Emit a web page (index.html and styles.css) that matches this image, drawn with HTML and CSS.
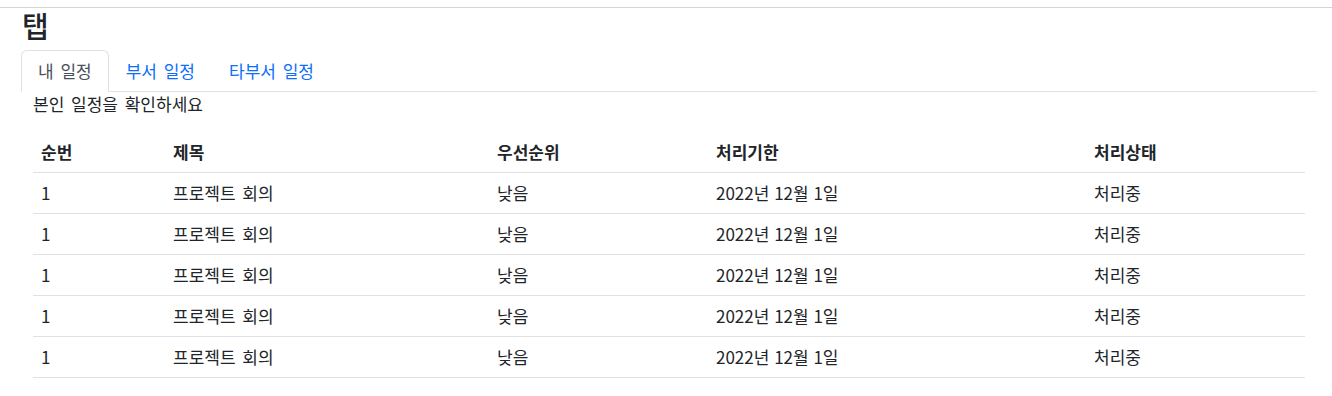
FILE: index.html
```html
<!DOCTYPE html>
<html lang="ko">
<head>
<meta charset="utf-8">
<title>탭</title>
<link rel="stylesheet" href="styles.css">
</head>
<body>
<div class="page">
  <h3 class="title">탭</h3>
  <ul class="nav-tabs">
    <li><a class="nav-link active" href="#">내 일정</a></li>
    <li><a class="nav-link" href="#">부서 일정</a></li>
    <li><a class="nav-link" href="#">타부서 일정</a></li>
  </ul>
  <div class="tab-content">
    <p class="desc">본인 일정을 확인하세요</p>
    <table class="table">
      <colgroup>
        <col class="c1"><col class="c2"><col class="c3"><col class="c4"><col class="c5">
      </colgroup>
      <thead>
        <tr><th>순번</th><th>제목</th><th>우선순위</th><th>처리기한</th><th>처리상태</th></tr>
      </thead>
      <tbody>
        <tr><td>1</td><td>프로젝트 회의</td><td>낮음</td><td class="date">2022년 12월 1일</td><td>처리중</td></tr>
        <tr><td>1</td><td>프로젝트 회의</td><td>낮음</td><td class="date">2022년 12월 1일</td><td>처리중</td></tr>
        <tr><td>1</td><td>프로젝트 회의</td><td>낮음</td><td class="date">2022년 12월 1일</td><td>처리중</td></tr>
        <tr><td>1</td><td>프로젝트 회의</td><td>낮음</td><td class="date">2022년 12월 1일</td><td>처리중</td></tr>
        <tr><td>1</td><td>프로젝트 회의</td><td>낮음</td><td class="date">2022년 12월 1일</td><td>처리중</td></tr>
      </tbody>
    </table>
  </div>
</div>
</body>
</html>
```

FILE: styles.css
```css
html, body {
  margin: 0;
  padding: 0;
  background: #fff;
}
body {
  font-family: "Noto Sans CJK KR", "Noto Sans", sans-serif;
  font-size: 17px;
  line-height: 24px;
  word-spacing: 2px;
  color: #212529;
}
.page {
  margin-top: 7px;
  border-top: 1px solid #d4d4d4;
  padding: 0 15px 0 21px;
}
.title {
  margin: 0 0 8px 1px;
  font-size: 29px;
  font-weight: 500;
  line-height: 34px;
}
.nav-tabs {
  display: flex;
  margin: 0;
  padding: 0;
  list-style: none;
  border-bottom: 1px solid #dee2e6;
}
.nav-link {
  display: block;
  padding: 8px 16px;
  margin-bottom: -1px;
  border: 1px solid transparent;
  border-radius: 6px 6px 0 0;
  color: #0d6efd;
  text-decoration: none;
}
.nav-link.active {
  color: #495057;
  background: #fff;
  border-color: #dee2e6 #dee2e6 #fff;
}
.tab-content {
  padding: 0 12px;
}
.desc {
  margin: 0 0 16px;
}
.table {
  width: 100%;
  border-collapse: collapse;
  table-layout: fixed;
}
.c1 { width: 132px; }
.c2 { width: 324px; }
.c3 { width: 219px; }
.c4 { width: 378px; }
.c5 { width: 219px; }
.table th,
.table td {
  padding: 8px;
  text-align: left;
  border-bottom: 1px solid #dee2e6;
  vertical-align: top;
}
.table th {
  font-weight: 700;
}
.table .date {
  word-spacing: 0;
}
```
